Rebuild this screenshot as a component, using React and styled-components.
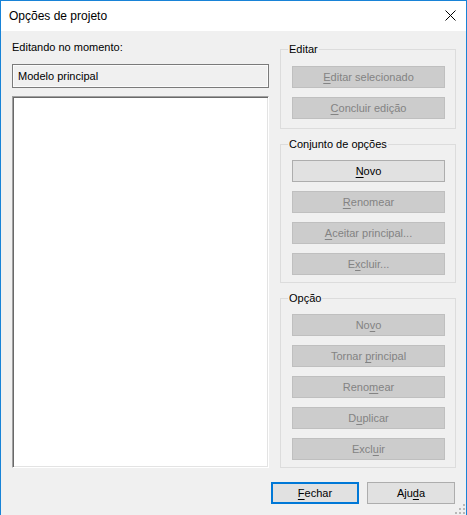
import React from "react";
import styled, { createGlobalStyle } from "styled-components";

const GlobalStyle = createGlobalStyle`
  html, body {
    margin: 0;
    padding: 0;
    background: #ffffff;
  }
  * {
    box-sizing: border-box;
  }
`;

const Window = styled("div")`
  position: relative;
  width: 467px;
  height: 515px;
  display: flex;
  flex-direction: column;
  background: #f0f0f0;
  border: 1px solid #1883d7;
  border-bottom: none;
  font-family: "Liberation Sans", Arial, sans-serif;
  font-size: 11px;
  color: #000;
`;

const TitleBar = styled("div")`
  height: 30px;
  flex: none;
  display: flex;
  align-items: center;
  justify-content: space-between;
  padding: 0 10px 0 8px;
  background: #ffffff;
  font-size: 12px;
`;

const CloseIcon = styled("svg")`
  display: block;
  margin-bottom: 1px;
`;

const Body = styled("div")`
  flex: 1;
  display: flex;
  flex-direction: column;
  padding: 9px 10px 0 11px;
`;

const Main = styled("div")`
  height: 428px;
  display: grid;
  grid-template-columns: 257px 176px;
  column-gap: 11px;
  align-items: start;
`;

const LeftColumn = styled("div")`
  display: flex;
  flex-direction: column;
`;

const Label = styled("div")`
  line-height: 15px;
  margin-bottom: 9px;
`;

const ReadOnlyBox = styled("div")`
  height: 24px;
  display: flex;
  align-items: center;
  padding-left: 5px;
  margin-bottom: 8px;
  border: 1px solid #7a7a7a;
  box-shadow: inset 0 0 0 1px #fbfbfb;
  background: #f0f0f0;
`;

const ListBox = styled("div")`
  height: 372px;
  background: #ffffff;
  border-top: 1px solid #a0a0a0;
  border-left: 1px solid #a0a0a0;
  border-right: 1px solid #ffffff;
  border-bottom: 1px solid #ffffff;
  box-shadow: inset 1px 1px 0 #696969, inset -1px -1px 0 #e3e3e3;
`;

const RightColumn = styled("div")`
  display: flex;
  flex-direction: column;
  margin-top: 2px;
`;

const Group = styled("fieldset")`
  margin: ${props => (props.$first ? "0" : "8px")} 0 0 0;
  padding: ${props => (props.$first ? "9px 10px 9px 11px" : "8px 10px 7px 11px")};
  border: 1px solid #dcdcdc;
  display: flex;
  flex-direction: column;
  gap: 9px;
  min-width: 0;
`;

const GroupTitle = styled("legend")`
  padding: 0 1px;
  margin-left: -4px;
  line-height: 15px;
`;

const Button = styled("button")`
  height: 22px;
  width: ${props => (props.$wide ? "100%" : "88px")};
  padding: 0;
  font-family: inherit;
  font-size: 11px;
  line-height: 14px;
  text-align: center;
  color: ${props => (props.disabled ? "#838383" : "#000000")};
  background: ${props => (props.disabled ? "#cccccc" : "#e1e1e1")};
  border: ${props =>
    props.$default
      ? "2px solid #0078d7"
      : props.disabled
      ? "1px solid #bfbfbf"
      : "1px solid #adadad"};
  border-radius: 0;
  outline: none;
`;

const Key = styled("u")`
  text-decoration: underline;
  text-underline-offset: 2px;
`;

const Footer = styled("div")`
  display: flex;
  justify-content: flex-end;
  gap: 8px;
  margin: 14px 1px 0 0;
`;

const Grip = styled("svg")`
  position: absolute;
  right: 0;
  bottom: 0;
`;

const Mnemonic = ({ text, at }) => (
  <>
    {text.slice(0, at)}
    <Key>{text[at]}</Key>
    {text.slice(at + 1)}
  </>
);

const editButtons = [
  { text: "Editar selecionado", at: 0, disabled: true },
  { text: "Concluir edição", at: 0, disabled: true }
];

const setButtons = [
  { text: "Novo", at: 0, disabled: false },
  { text: "Renomear", at: 0, disabled: true },
  { text: "Aceitar principal...", at: 0, disabled: true },
  { text: "Excluir...", at: 1, disabled: true }
];

const optionButtons = [
  { text: "Novo", at: 2, disabled: true },
  { text: "Tornar principal", at: 7, disabled: true },
  { text: "Renomear", at: 4, disabled: true },
  { text: "Duplicar", at: 1, disabled: true },
  { text: "Excluir", at: 4, disabled: true }
];

const renderButtons = list =>
  list.map(b => (
    <Button key={b.text} $wide disabled={b.disabled}>
      <Mnemonic text={b.text} at={b.at} />
    </Button>
  ));

const App = () => (
  <>
    <GlobalStyle />
    <Window>
      <TitleBar>
        <span>Opções de projeto</span>
        <CloseIcon width="11" height="11" viewBox="0 0 11 11">
          <path d="M0.5 0.5 L10.5 10.5 M10.5 0.5 L0.5 10.5" stroke="#000" strokeWidth="1" fill="none" />
        </CloseIcon>
      </TitleBar>
      <Body>
        <Main>
          <LeftColumn>
            <Label>Editando no momento:</Label>
            <ReadOnlyBox>Modelo principal</ReadOnlyBox>
            <ListBox />
          </LeftColumn>
          <RightColumn>
            <Group $first>
              <GroupTitle>Editar</GroupTitle>
              {renderButtons(editButtons)}
            </Group>
            <Group>
              <GroupTitle>Conjunto de opções</GroupTitle>
              {renderButtons(setButtons)}
            </Group>
            <Group>
              <GroupTitle>Opção</GroupTitle>
              {renderButtons(optionButtons)}
            </Group>
          </RightColumn>
        </Main>
        <Footer>
          <Button $default>
            <Mnemonic text="Fechar" at={0} />
          </Button>
          <Button>
            <Mnemonic text="Ajuda" at={3} />
          </Button>
        </Footer>
      </Body>
      <Grip width="12" height="12" viewBox="0 0 12 12">
        <g fill="#b8b8b8">
          <rect x="9" y="1" width="2" height="2" />
          <rect x="5" y="5" width="2" height="2" />
          <rect x="9" y="5" width="2" height="2" />
          <rect x="1" y="9" width="2" height="2" />
          <rect x="5" y="9" width="2" height="2" />
          <rect x="9" y="9" width="2" height="2" />
        </g>
      </Grip>
    </Window>
  </>
);

export default App;
